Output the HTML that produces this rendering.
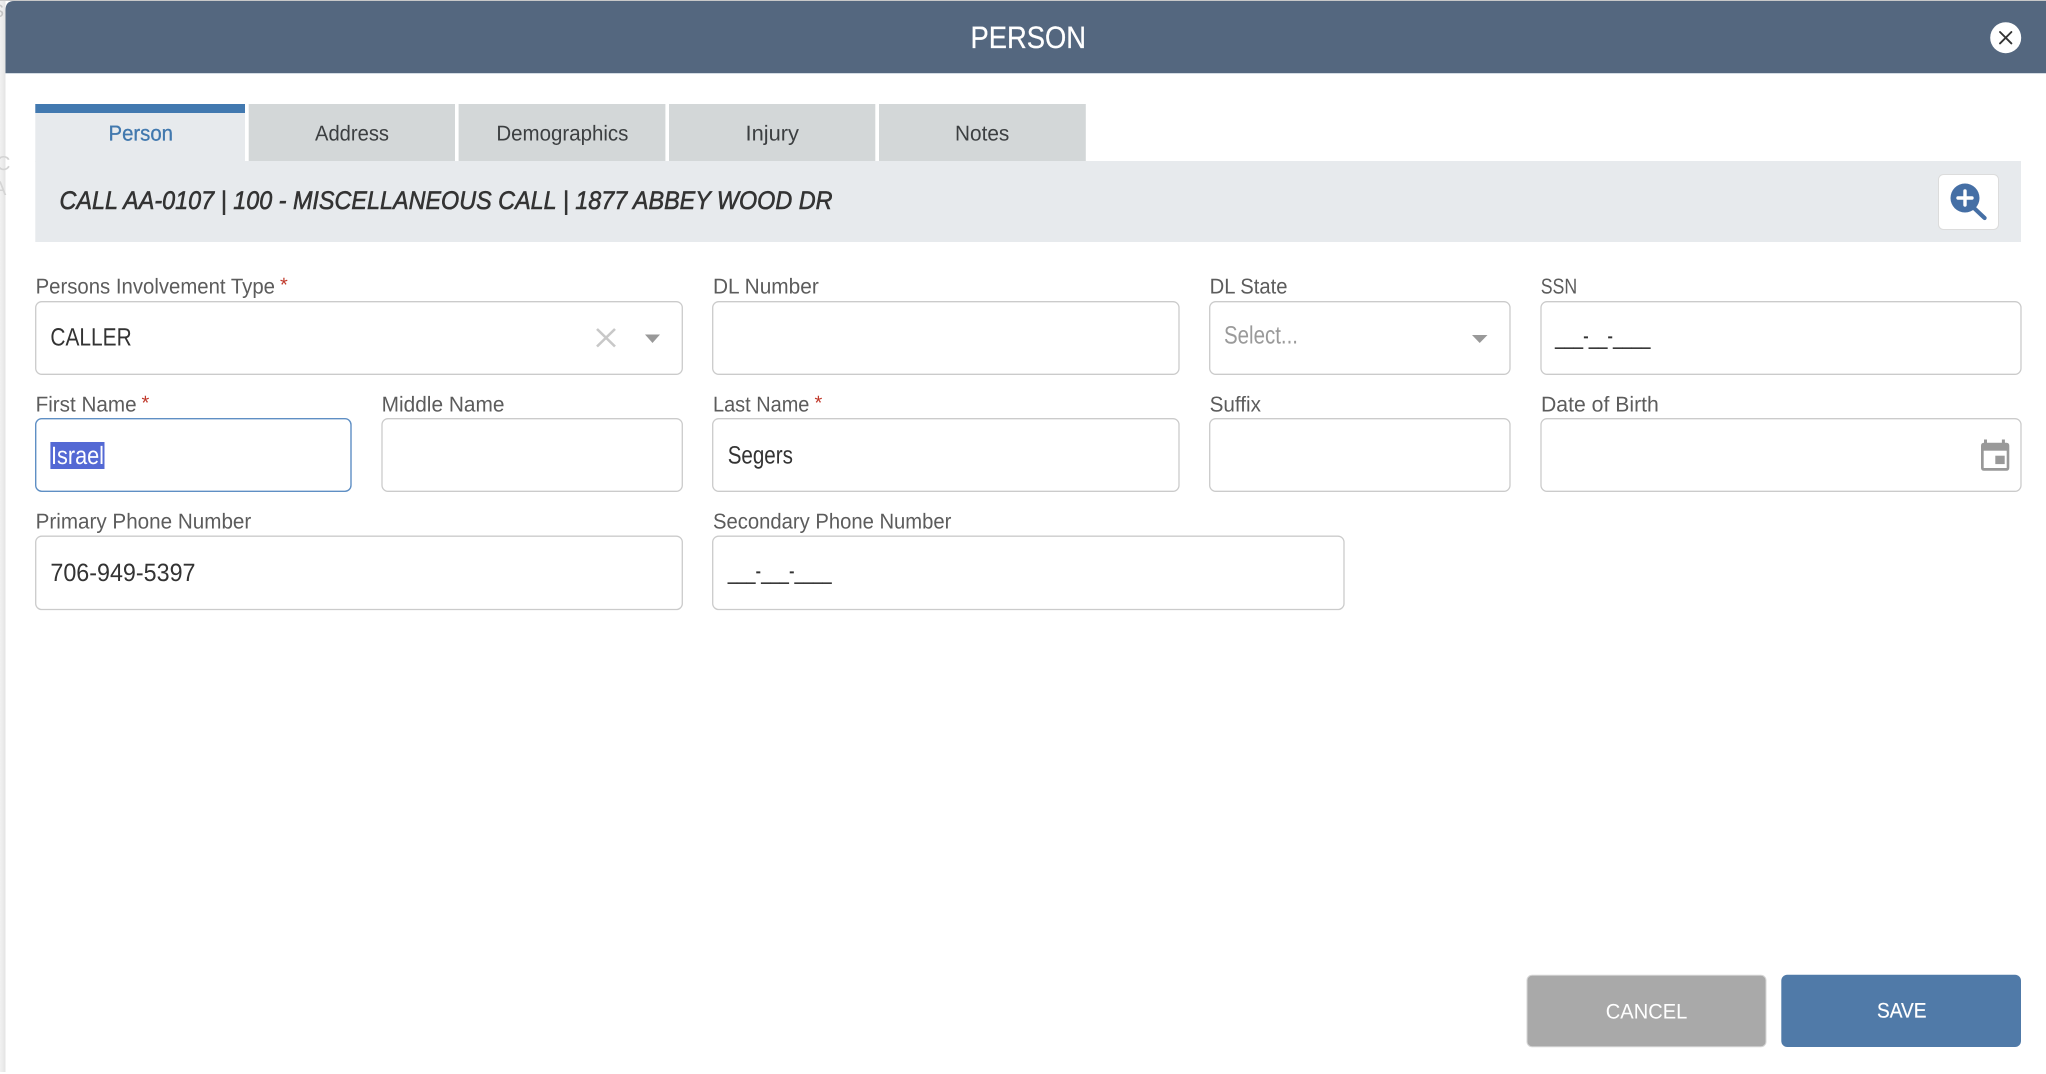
<!DOCTYPE html>
<html lang="en">
<head>
<meta charset="utf-8">
<title>Person</title>
<style>
html,body{margin:0;padding:0;width:2046px;height:1074px;overflow:hidden;background:#fff}
svg{display:block}
text{font-family:"Liberation Sans",Arial,sans-serif;text-rendering:geometricPrecision}
.l{font-size:21.5px;fill:#5c5c5c}
.v{font-size:25px;fill:#333}
.t{font-size:21.5px;fill:#3c3f41}
.b{fill:#fff;stroke:#cbcbcb;stroke-width:1.3}
.s{font-size:20px;fill:#c0392b}
</style>
</head>
<body>
<svg width="2046" height="1074" viewBox="0 0 2046 1074" xmlns="http://www.w3.org/2000/svg">
<defs>
<linearGradient id="sh" x1="0" x2="1" y1="0" y2="0"><stop offset="0" stop-color="#f2f2f2"/><stop offset="1" stop-color="#e4e4e4"/></linearGradient>
</defs>
<rect x="0" y="0" width="2046" height="1074" fill="#fff"/>
<rect x="0" y="0" width="5.5" height="1072" fill="url(#sh)"/>
<rect x="0" y="0" width="2046" height="1" fill="#c8c8c8"/>
<text x="-8" y="17" font-size="18" fill="#c4c4c4">S</text>
<text x="-4" y="170" font-size="20" fill="#d4d4d4">C</text>
<text x="-7" y="195" font-size="20" fill="#d4d4d4">A</text>

<!-- header -->
<path d="M5.5 73V10Q5.5 1 14 1H2046V73Z" fill="#54677f"/>
<rect x="5.5" y="73" width="2040.5" height="1" fill="#d3dbe3"/>
<text x="970.5" y="48" font-size="31" fill="#fff" stroke="#fff" stroke-width=".25" textLength="115.5" lengthAdjust="spacingAndGlyphs">PERSON</text>
<circle cx="2005.7" cy="37.7" r="15.5" fill="#fff"/>
<path d="M2000 32L2011.4 43.4M2011.4 32L2000 43.4" stroke="#333" stroke-width="1.9" fill="none" stroke-linecap="round"/>

<!-- tabs -->
<rect x="35.3" y="104" width="209.7" height="58" fill="#e7eaed"/>
<rect x="35.3" y="104" width="209.7" height="9" fill="#4279b0"/>
<rect x="248.7" y="104" width="206.3" height="57" fill="#d3d7d8"/>
<rect x="458.6" y="104" width="206.8" height="57" fill="#d3d7d8"/>
<rect x="669" y="104" width="206.3" height="57" fill="#d3d7d8"/>
<rect x="879" y="104" width="206.8" height="57" fill="#d3d7d8"/>
<text x="108.5" y="140.5" class="t" style="fill:#4178ae" stroke="#4178ae" stroke-width=".3" textLength="64.5" lengthAdjust="spacingAndGlyphs">Person</text>
<text x="315" y="140.5" class="t" textLength="74" lengthAdjust="spacingAndGlyphs">Address</text>
<text x="496.4" y="140.5" class="t" textLength="132" lengthAdjust="spacingAndGlyphs">Demographics</text>
<text x="745.5" y="140.5" class="t" textLength="53.5" lengthAdjust="spacingAndGlyphs">Injury</text>
<text x="955" y="140.5" class="t" textLength="54.3" lengthAdjust="spacingAndGlyphs">Notes</text>

<!-- call bar -->
<rect x="35.3" y="161" width="1985.7" height="81" fill="#e7eaed"/>
<text x="59.5" y="209" font-size="25.5" font-style="italic" fill="#333" stroke="#333" stroke-width=".6" textLength="773" lengthAdjust="spacingAndGlyphs">CALL AA-0107 | 100 - MISCELLANEOUS CALL | 1877 ABBEY WOOD DR</text>
<rect x="1938.5" y="174.5" width="60" height="55" rx="5" fill="#fff" stroke="#dcdcdc" stroke-width="1"/>
<path d="M1974.5 208.5L1984.6 218" stroke="#456fa5" stroke-width="4.2" stroke-linecap="round" fill="none"/>
<circle cx="1965" cy="198" r="14.5" fill="#456fa5"/>
<path d="M1965 191V205M1958 198H1972" stroke="#fff" stroke-width="3.4" stroke-linecap="round" fill="none"/>

<!-- labels -->
<text x="35.6" y="293.5" class="l" textLength="239.4" lengthAdjust="spacingAndGlyphs">Persons Involvement Type</text>
<text x="280" y="291.5" class="s">*</text>
<text x="713" y="293.5" class="l" textLength="105.8" lengthAdjust="spacingAndGlyphs">DL Number</text>
<text x="1209.6" y="293.5" class="l" textLength="77.9" lengthAdjust="spacingAndGlyphs">DL State</text>
<text x="1540.7" y="293.5" class="l" textLength="36.5" lengthAdjust="spacingAndGlyphs">SSN</text>

<text x="35.6" y="411.5" class="l" textLength="101" lengthAdjust="spacingAndGlyphs">First Name</text>
<text x="141.5" y="409.5" class="s">*</text>
<text x="381.6" y="411.5" class="l" textLength="122.9" lengthAdjust="spacingAndGlyphs">Middle Name</text>
<text x="713" y="411.5" class="l" textLength="96.4" lengthAdjust="spacingAndGlyphs">Last Name</text>
<text x="814.5" y="409.5" class="s">*</text>
<text x="1209.6" y="411.5" class="l" textLength="51.4" lengthAdjust="spacingAndGlyphs">Suffix</text>
<text x="1541" y="411.5" class="l" textLength="117.8" lengthAdjust="spacingAndGlyphs">Date of Birth</text>

<text x="35.6" y="528.5" class="l" textLength="215.7" lengthAdjust="spacingAndGlyphs">Primary Phone Number</text>
<text x="713" y="528.5" class="l" textLength="238.4" lengthAdjust="spacingAndGlyphs">Secondary Phone Number</text>

<!-- row 1 -->
<rect x="35.7" y="301.7" width="646.6" height="72.6" rx="6" class="b"/>
<text x="50.4" y="345.5" class="v" textLength="81.3" lengthAdjust="spacingAndGlyphs">CALLER</text>
<path d="M597 329L615 346.5M615 329L597 346.5" stroke="#c8c8c8" stroke-width="2.6" fill="none"/>
<path d="M645 334.5H660L652.5 343Z" fill="#999"/>

<rect x="712.7" y="301.7" width="466.3" height="72.6" rx="6" class="b"/>

<rect x="1209.7" y="301.7" width="300.3" height="72.6" rx="6" class="b"/>
<text x="1224" y="343.5" class="v" style="fill:#9a9a9a" textLength="74" lengthAdjust="spacingAndGlyphs">Select...</text>
<path d="M1472 335H1487.5L1479.7 343Z" fill="#999"/>

<rect x="1541" y="301.7" width="480" height="72.6" rx="6" class="b"/>
<text x="1555" y="344" class="v" textLength="95.5" lengthAdjust="spacingAndGlyphs">___-__-____</text>

<!-- row 2 -->
<rect x="35.7" y="418.7" width="315.3" height="72.6" rx="6" fill="#fff" stroke="#5f8fc4" stroke-width="1.4"/>
<rect x="50.4" y="442" width="54.1" height="27" fill="#5469d4"/>
<text x="51" y="464" class="v" style="fill:#fff" textLength="53" lengthAdjust="spacingAndGlyphs">Israel</text>

<rect x="382" y="418.7" width="300.3" height="72.6" rx="6" class="b"/>

<rect x="712.7" y="418.7" width="466.3" height="72.6" rx="6" class="b"/>
<text x="727.7" y="463.5" class="v" textLength="65.2" lengthAdjust="spacingAndGlyphs">Segers</text>

<rect x="1209.7" y="418.7" width="300.3" height="72.6" rx="6" class="b"/>

<rect x="1541" y="418.7" width="480" height="72.6" rx="6" class="b"/>
<path d="M1984 442.7V439.5H1987V442.7H2001.9V439.5H2004.9V442.7H2006.3Q2009.3 442.7 2009.3 445.7V467.7Q2009.3 470.7 2006.3 470.7H1984Q1981 470.7 1981 467.7V445.7Q1981 442.7 1984 442.7Z" fill="#999"/>
<rect x="1983.7" y="450.7" width="23" height="17.3" fill="#fff"/>
<rect x="1995.3" y="455.7" width="9.4" height="8.4" fill="#999"/>

<!-- row 3 -->
<rect x="35.7" y="536.2" width="646.6" height="73.3" rx="6" class="b"/>
<text x="50.4" y="581" class="v" textLength="145.1" lengthAdjust="spacingAndGlyphs">706-949-5397</text>

<rect x="712.7" y="536.2" width="631.3" height="73.3" rx="6" class="b"/>
<text x="727.7" y="579" class="v" textLength="104" lengthAdjust="spacingAndGlyphs">___-___-____</text>

<!-- buttons -->
<rect x="1527" y="975.3" width="239" height="71.4" rx="5" fill="#a9a9a9" stroke="#d6d6d6" stroke-width="1"/>
<text x="1605.8" y="1018.5" font-size="21" fill="#fff" textLength="81.5" lengthAdjust="spacingAndGlyphs">CANCEL</text>
<rect x="1781.3" y="974.7" width="239.7" height="72.3" rx="6" fill="#507aa8"/>
<text x="1877" y="1017.5" font-size="21" fill="#fff" stroke="#fff" stroke-width=".2" textLength="49.5" lengthAdjust="spacingAndGlyphs">SAVE</text>
</svg>
</body>
</html>
